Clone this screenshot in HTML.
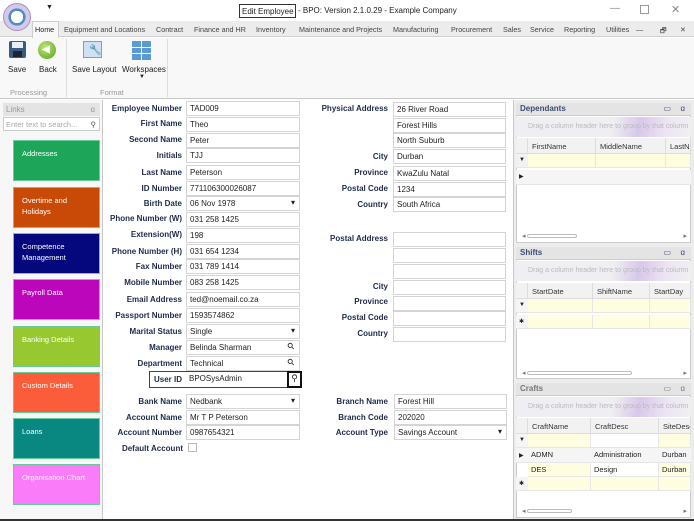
<!DOCTYPE html>
<html><head><meta charset="utf-8"><style>
*{box-sizing:border-box;margin:0;padding:0}
body{width:694px;height:521px;overflow:hidden;background:#fff;font-family:"Liberation Sans",sans-serif;position:relative;font-size:9px;color:#222}
.a{position:absolute}
.lb{position:absolute;text-align:right;font-weight:bold;font-size:8px;color:#1e2b4a;white-space:nowrap}
.in{position:absolute;height:15px;border:1px solid #d4d4d4;background:#fff;font-size:8px;padding:2px 0 0 3px;white-space:nowrap;color:#222}
.dd::after{content:"▾";position:absolute;right:4px;top:1px;font-size:8px}
.sr::after{content:"⚲";position:absolute;right:4px;top:0px;font-size:9px;transform:rotate(-45deg)}
.tile{position:absolute;left:13px;width:87px;height:41px;color:#fff;font-size:7.5px;padding:7px 8px;line-height:11px;border:1px solid #6c9}
.ph{position:absolute;left:516px;width:175px;height:13px;background:#e4e4e4;font-weight:bold;font-size:8px;color:#3b4d70;padding:1px 0 0 4px;border-bottom:1px solid #ccc}
.drag{position:absolute;left:516px;width:175px;height:20px;background:linear-gradient(100deg,#efeef2 0%,#efeef2 55%,#d8c8ea 70%,#ece4f4 85%,#f0f0f2 100%);color:#bbb;font-size:7px;padding:6px 0 0 12px;white-space:nowrap;overflow:hidden}
.gh{position:absolute;height:16px;background:#f2f2f2;border-right:1px solid #ddd;border-bottom:1px solid #ddd;font-size:7.5px;padding:4px 0 0 4px;color:#333;white-space:nowrap;overflow:hidden}
.gy{position:absolute;height:14px;background:#fffde0;border-right:1px solid #e6e6e6;border-bottom:1px solid #e6e6e6}
.gw{position:absolute;height:14px;background:#f5f5f5;border-bottom:1px solid #e6e6e6}
.tab{position:absolute;top:25px;font-size:7.2px;color:#444;white-space:nowrap}
.sb{position:absolute;left:522px;width:165px;height:8px;font-size:7px;color:#777}
</style></head><body>
<!-- title bar -->
<div class="a" style="left:0;top:0;width:694px;height:21px;background:#fff"></div>
<div class="a" style="left:46px;top:4px;font-size:7px">▼</div>
<div class="a" style="left:239px;top:4px;width:57px;height:14px;border:1px solid #333;font-size:8px;padding:2px 0 0 2px;white-space:nowrap;overflow:hidden">Edit Employee</div>
<div class="a" style="left:298px;top:6px;font-size:8px;white-space:nowrap">- BPO: Version 2.1.0.29 - Example Company</div>
<div class="a" style="left:610px;top:3px;font-size:10px;color:#888">—</div>
<div class="a" style="left:640px;top:5px;width:9px;height:9px;border:1px solid #999"></div>
<div class="a" style="left:671px;top:3px;font-size:11px;color:#888">✕</div>
<!-- tab row -->
<div class="a" style="left:0;top:21px;width:694px;height:16px;background:#ececec;border-bottom:1px solid #d0d0d0"></div>
<div class="a" style="left:32px;top:21px;width:27px;height:17px;background:#f8f8f8;border:1px solid #ccc;border-bottom:none"></div>
<div class="a" style="left:3px;top:3px;width:28px;height:28px;border-radius:50%;background:radial-gradient(circle at 50% 50%,#fff 0 33%,#4a90c8 34% 46%,#d8c8e8 48% 100%);border:1px solid #a890c0"></div>
<div class="tab" style="left:35px;color:#222">Home</div>
<div class="tab" style="left:64px">Equipment and Locations</div>
<div class="tab" style="left:156px">Contract</div>
<div class="tab" style="left:194px">Finance and HR</div>
<div class="tab" style="left:256px">Inventory</div>
<div class="tab" style="left:299px">Maintenance and Projects</div>
<div class="tab" style="left:393px">Manufacturing</div>
<div class="tab" style="left:451px">Procurement</div>
<div class="tab" style="left:503px">Sales</div>
<div class="tab" style="left:530px">Service</div>
<div class="tab" style="left:564px">Reporting</div>
<div class="tab" style="left:606px">Utilities</div>
<div class="tab" style="left:636px">—</div>
<div class="tab" style="left:660px">🗗</div>
<div class="tab" style="left:680px">✕</div>
<!-- ribbon -->
<div class="a" style="left:0;top:38px;width:694px;height:61px;background:#f8f8f8;border-bottom:1px solid #c8c8c8"></div>
<div class="a" style="left:9px;top:41px;width:17px;height:17px;background:#3a5a80;border-radius:2px"></div>
<div class="a" style="left:12px;top:42px;width:11px;height:6px;background:#e8eef5"></div>
<div class="a" style="left:13px;top:51px;width:9px;height:6px;background:#223"></div>
<div class="a" style="left:8px;top:65px;font-size:8px">Save</div>
<div class="a" style="left:38px;top:41px;width:18px;height:18px;border-radius:50%;background:radial-gradient(circle at 40% 35%,#b8e870,#5aa020)"></div>
<div class="a" style="left:42px;top:44px;color:#fff;font-size:10px;font-weight:bold">◀</div>
<div class="a" style="left:39px;top:65px;font-size:8px">Back</div>
<div class="a" style="left:66px;top:39px;width:1px;height:58px;background:#ddd"></div>
<div class="a" style="left:83px;top:41px;width:19px;height:17px;background:#cfe0f2;border:1px solid #7aa0c8"></div>
<div class="a" style="left:89px;top:45px;font-size:10px;color:#666">🔧</div>
<div class="a" style="left:72px;top:65px;font-size:8px;white-space:nowrap">Save Layout</div>
<div class="a" style="left:132px;top:41px;width:20px;height:19px;background:repeating-linear-gradient(90deg,#5b9bd5 0 9px,#fff 9px 10px),#5b9bd5;"></div>
<div class="a" style="left:132px;top:47px;width:20px;height:1px;background:#fff"></div>
<div class="a" style="left:132px;top:53px;width:20px;height:1px;background:#fff"></div>
<div class="a" style="left:122px;top:65px;font-size:8px">Workspaces</div>
<div class="a" style="left:139px;top:74px;font-size:6px">▼</div>
<div class="a" style="left:167px;top:39px;width:1px;height:58px;background:#ddd"></div>
<div class="a" style="left:10px;top:88px;font-size:7.5px;color:#999">Processing</div>
<div class="a" style="left:100px;top:88px;font-size:7.5px;color:#999">Format</div>
<!-- left panel -->
<div class="a" style="left:0;top:100px;width:103px;height:421px;background:#f7f7f7;border-right:1px solid #c8c8c8"></div>
<div class="a" style="left:3px;top:103px;width:97px;height:13px;background:#e4e4e4;color:#999;font-size:8px;padding:2px 0 0 3px">Links<span style="position:absolute;right:5px">ɑ</span></div>
<div class="a" style="left:3px;top:117px;width:97px;height:14px;background:#fff;border:1px solid #ccc;color:#aaa;font-size:7.5px;padding:2px 0 0 2px;white-space:nowrap">Enter text to search...<span style="position:absolute;right:3px;color:#555">⚲</span></div>
<div class="tile" style="top:140px;background:#1da55a">Addresses</div>
<div class="tile" style="top:187px;background:#c94a06">Overtime and Holidays</div>
<div class="tile" style="top:233px;background:#05087c">Competence Management</div>
<div class="tile" style="top:279px;background:#bb06bc">Payroll Data</div>
<div class="tile" style="top:326px;background:#97c830">Banking Details</div>
<div class="tile" style="top:372px;background:#fb5d3a">Custom Details</div>
<div class="tile" style="top:418px;background:#088880">Loans</div>
<div class="tile" style="top:464px;background:#fa7cf8">Organisation Chart</div>
<div class="a" style="left:0;top:519px;width:694px;height:2px;background:#333"></div>
<!-- form labels left -->
<div class="lb" style="left:0;width:182px;top:104px">Employee Number</div>
<div class="lb" style="left:0;width:182px;top:119px">First Name</div>
<div class="lb" style="left:0;width:182px;top:135px">Second Name</div>
<div class="lb" style="left:0;width:182px;top:151px">Initials</div>
<div class="lb" style="left:0;width:182px;top:168px">Last Name</div>
<div class="lb" style="left:0;width:182px;top:184px">ID Number</div>
<div class="lb" style="left:0;width:182px;top:199px">Birth Date</div>
<div class="lb" style="left:0;width:182px;top:214px">Phone Number (W)</div>
<div class="lb" style="left:0;width:182px;top:230px">Extension(W)</div>
<div class="lb" style="left:0;width:182px;top:247px">Phone Number (H)</div>
<div class="lb" style="left:0;width:182px;top:262px">Fax Number</div>
<div class="lb" style="left:0;width:182px;top:278px">Mobile Number</div>
<div class="lb" style="left:0;width:182px;top:295px">Email Address</div>
<div class="lb" style="left:0;width:182px;top:311px">Passport Number</div>
<div class="lb" style="left:0;width:182px;top:327px">Marital Status</div>
<div class="lb" style="left:0;width:182px;top:343px">Manager</div>
<div class="lb" style="left:0;width:182px;top:359px">Department</div>
<div class="lb" style="left:0;width:182px;top:397px">Bank Name</div>
<div class="lb" style="left:0;width:182px;top:413px">Account Name</div>
<div class="lb" style="left:0;width:182px;top:428px">Account Number</div>
<div class="lb" style="left:0;width:183px;top:444px">Default Account</div>
<div class="in" style="left:186px;top:101px;width:114px">TAD009</div>
<div class="in" style="left:186px;top:117px;width:114px">Theo</div>
<div class="in" style="left:186px;top:133px;width:114px">Peter</div>
<div class="in" style="left:186px;top:148px;width:114px">TJJ</div>
<div class="in" style="left:186px;top:165px;width:114px">Peterson</div>
<div class="in" style="left:186px;top:181px;width:114px">771106300026087</div>
<div class="in dd" style="left:186px;top:196px;width:114px">06 Nov 1978</div>
<div class="in" style="left:186px;top:212px;width:114px">031 258 1425</div>
<div class="in" style="left:186px;top:228px;width:114px">198</div>
<div class="in" style="left:186px;top:244px;width:114px">031 654 1234</div>
<div class="in" style="left:186px;top:259px;width:114px">031 789 1414</div>
<div class="in" style="left:186px;top:275px;width:114px">083 258 1425</div>
<div class="in" style="left:186px;top:292px;width:114px">ted@noemail.co.za</div>
<div class="in" style="left:186px;top:308px;width:114px">1593574862</div>
<div class="in dd" style="left:186px;top:324px;width:114px">Single</div>
<div class="in sr" style="left:186px;top:340px;width:114px">Belinda Sharman</div>
<div class="in sr" style="left:186px;top:356px;width:114px">Technical</div>
<div class="a" style="left:149px;top:371px;width:153px;height:17px;border:1px solid #444"></div>
<div class="lb" style="left:0;width:182px;top:375px">User ID</div>
<div class="in" style="left:186px;top:372px;width:100px;border:none;background:transparent">BPOSysAdmin</div>
<div class="a" style="left:287px;top:371px;width:15px;height:17px;border:2px solid #111;font-size:9px;text-align:center">⚲</div>
<div class="in dd" style="left:186px;top:394px;width:114px">Nedbank</div>
<div class="in" style="left:186px;top:410px;width:114px">Mr T P Peterson</div>
<div class="in" style="left:186px;top:425px;width:114px">0987654321</div>
<div class="a" style="left:188px;top:443px;width:9px;height:9px;border:1px solid #bbb"></div>
<!-- right form -->
<div class="lb" style="left:300px;width:88px;top:104px">Physical Address</div>
<div class="lb" style="left:300px;width:88px;top:152px">City</div>
<div class="lb" style="left:300px;width:88px;top:168px">Province</div>
<div class="lb" style="left:300px;width:88px;top:184px">Postal Code</div>
<div class="lb" style="left:300px;width:88px;top:200px">Country</div>
<div class="lb" style="left:300px;width:88px;top:234px">Postal Address</div>
<div class="lb" style="left:300px;width:88px;top:282px">City</div>
<div class="lb" style="left:300px;width:88px;top:297px">Province</div>
<div class="lb" style="left:300px;width:88px;top:313px">Postal Code</div>
<div class="lb" style="left:300px;width:88px;top:329px">Country</div>
<div class="lb" style="left:300px;width:88px;top:397px">Branch Name</div>
<div class="lb" style="left:300px;width:88px;top:413px">Branch Code</div>
<div class="lb" style="left:300px;width:88px;top:428px">Account Type</div>
<div class="in" style="left:393px;top:102px;width:113px">26 River Road</div>
<div class="in" style="left:393px;top:118px;width:113px">Forest Hills</div>
<div class="in" style="left:393px;top:133px;width:113px">North Suburb</div>
<div class="in" style="left:393px;top:149px;width:113px">Durban</div>
<div class="in" style="left:393px;top:166px;width:113px">KwaZulu Natal</div>
<div class="in" style="left:393px;top:182px;width:113px">1234</div>
<div class="in" style="left:393px;top:197px;width:113px">South Africa</div>
<div class="in" style="left:393px;top:232px;width:113px"></div>
<div class="in" style="left:393px;top:248px;width:113px"></div>
<div class="in" style="left:393px;top:264px;width:113px"></div>
<div class="in" style="left:393px;top:280px;width:113px"></div>
<div class="in" style="left:393px;top:296px;width:113px"></div>
<div class="in" style="left:393px;top:311px;width:113px"></div>
<div class="in" style="left:393px;top:327px;width:113px"></div>
<div class="in" style="left:394px;top:394px;width:113px">Forest Hill</div>
<div class="in" style="left:394px;top:410px;width:113px">202020</div>
<div class="in dd" style="left:394px;top:425px;width:113px">Savings Account</div>
<!-- right panels -->
<div class="a" style="left:513px;top:100px;width:181px;height:419px;background:#ededed;border-left:1px solid #c8c8c8"></div>
<div class="a" style="left:516px;top:103px;width:175px;height:140px;background:#fff;border:1px solid #ccc"></div>
<div class="a" style="left:516px;top:247px;width:175px;height:132px;background:#fff;border:1px solid #ccc"></div>
<div class="a" style="left:516px;top:383px;width:175px;height:135px;background:#fff;border:1px solid #ccc"></div>
<div class="ph" style="top:103px">Dependants<span style="position:absolute;right:20px;font-weight:normal">▭</span><span style="position:absolute;right:6px;font-weight:normal">ɑ</span></div>
<div class="drag" style="top:117px">Drag a column header here to group by that column</div>
<div class="gh" style="left:516px;top:138px;width:12px"></div>
<div class="gh" style="left:528px;top:138px;width:68px">FirstName</div>
<div class="gh" style="left:596px;top:138px;width:70px">MiddleName</div>
<div class="gh" style="left:666px;top:138px;width:25px">LastN</div>
<div class="gw" style="left:516px;top:154px;width:12px;background:#f2f2f2;font-size:6px;padding:3px 3px">▼</div>
<div class="gy" style="left:528px;top:154px;width:68px"></div><div class="gy" style="left:596px;top:154px;width:70px"></div><div class="gy" style="left:666px;top:154px;width:25px"></div>
<div class="gw" style="left:516px;top:170px;width:175px;height:15px;font-size:6px;padding:3px 3px">▶</div>
<div class="sb" style="top:232px">◂ <span style="display:inline-block;width:50px;height:4px;border:1px solid #bbb;border-radius:2px"></span><span style="position:absolute;right:0">▸</span></div>
<div class="ph" style="top:247px">Shifts<span style="position:absolute;right:20px;font-weight:normal">▭</span><span style="position:absolute;right:6px;font-weight:normal">ɑ</span></div>
<div class="drag" style="top:261px">Drag a column header here to group by that column</div>
<div class="gh" style="left:516px;top:283px;width:12px"></div>
<div class="gh" style="left:528px;top:283px;width:65px">StartDate</div>
<div class="gh" style="left:593px;top:283px;width:57px">ShiftName</div>
<div class="gh" style="left:650px;top:283px;width:41px">StartDay</div>
<div class="gw" style="left:516px;top:299px;width:12px;font-size:6px;padding:3px 3px">▼</div>
<div class="gy" style="left:528px;top:299px;width:65px"></div><div class="gy" style="left:593px;top:299px;width:57px"></div><div class="gy" style="left:650px;top:299px;width:41px"></div>
<div class="gw" style="left:516px;top:315px;width:12px;font-size:6px;padding:3px 3px">✱</div>
<div class="gy" style="left:528px;top:315px;width:65px"></div><div class="gy" style="left:593px;top:315px;width:57px"></div><div class="gy" style="left:650px;top:315px;width:41px"></div>
<div class="sb" style="top:369px">◂ <span style="display:inline-block;width:105px;height:4px;border:1px solid #bbb;border-radius:2px"></span><span style="position:absolute;right:0">▸</span></div>
<div class="ph" style="top:383px;color:#777">Crafts<span style="position:absolute;right:20px;font-weight:normal">▭</span><span style="position:absolute;right:6px;font-weight:normal">ɑ</span></div>
<div class="drag" style="top:397px">Drag a column header here to group by that column</div>
<div class="gh" style="left:516px;top:418px;width:12px"></div>
<div class="gh" style="left:528px;top:418px;width:63px">CraftName</div>
<div class="gh" style="left:591px;top:418px;width:68px">CraftDesc</div>
<div class="gh" style="left:659px;top:418px;width:32px">SiteDesc</div>
<div class="gw" style="left:516px;top:434px;width:12px;font-size:6px;padding:3px 3px">▼</div>
<div class="gy" style="left:528px;top:434px;width:63px"></div><div class="gy" style="left:591px;top:434px;width:68px;background:#fff"></div><div class="gy" style="left:659px;top:434px;width:32px"></div>
<div class="gw" style="left:516px;top:448px;width:175px;height:15px;font-size:7.5px;padding:2px 3px;white-space:nowrap"><span style="font-size:6px">▶</span><span style="position:absolute;left:15px">ADMN</span><span style="position:absolute;left:78px">Administration</span><span style="position:absolute;left:146px">Durban</span></div>
<div class="gy" style="left:528px;top:463px;width:63px;font-size:7.5px;padding:2px 3px">DES</div><div class="gy" style="left:591px;top:463px;width:68px;background:#fff;font-size:7.5px;padding:2px 3px">Design</div><div class="gy" style="left:659px;top:463px;width:32px;font-size:7.5px;padding:2px 3px">Durban</div>
<div class="gw" style="left:516px;top:477px;width:12px;font-size:6px;padding:3px 3px">✱</div>
<div class="gy" style="left:528px;top:477px;width:63px"></div><div class="gy" style="left:591px;top:477px;width:68px"></div><div class="gy" style="left:659px;top:477px;width:32px"></div>
<div class="sb" style="top:507px">◂ <span style="display:inline-block;width:45px;height:4px;border:1px solid #bbb;border-radius:2px"></span><span style="position:absolute;right:0">▸</span></div>
</body></html>
